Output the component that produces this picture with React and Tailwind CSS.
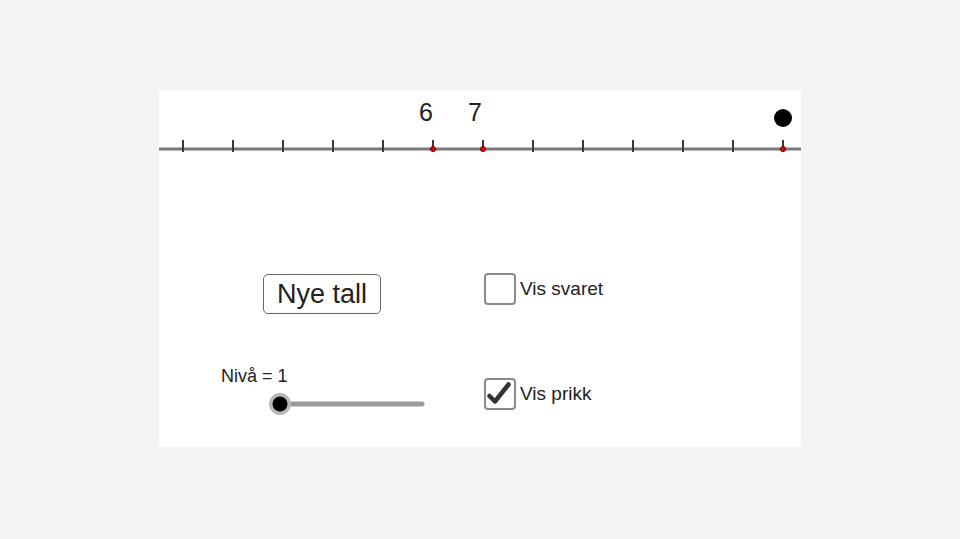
const font = { fontFamily: '"Liberation Sans", Arial, sans-serif' };

function NumberLine() {
  const ticks = Array.from({ length: 13 }, (_, i) => 24 + i * 50);
  const marked = [274, 324, 624];
  return (
    <svg width="642" height="80" className="block">
      <line x1="0" y1="58" x2="642" y2="58" stroke="#7a7a7a" strokeWidth="3" />
      {ticks.map((x) => (
        <line key={x} x1={x} y1="49" x2={x} y2="61" stroke="#3a3a3a" strokeWidth="2" />
      ))}
      {marked.map((x) => (
        <circle key={x} cx={x} cy="58" r="2.6" fill="#e00000" stroke="#600" strokeWidth="0.8" />
      ))}
      <circle cx="624" cy="27" r="9" fill="#000" />
      <text x="267" y="30" textAnchor="middle" fontSize="25" fill="#222" style={font}>6</text>
      <text x="316" y="30" textAnchor="middle" fontSize="25" fill="#222" style={font}>7</text>
    </svg>
  );
}

function CheckBox({ checked, label }) {
  return (
    <label className="flex items-center gap-[4px]">
      <span className="flex h-[32px] w-[32px] items-center justify-center rounded-[4px] border-2 border-[#8a8a8a] bg-white">
        {checked && (
          <svg width="28" height="28" viewBox="0 0 28 28">
            <path d="M3.5 16 L9 21.5 L22.5 4.5" fill="none" stroke="#333" strokeWidth="4.5" strokeLinecap="round" strokeLinejoin="round" />
          </svg>
        )}
      </span>
      <span className="text-[19px] leading-[22px] text-[#222]">{label}</span>
    </label>
  );
}

export default function App() {
  return (
    <div className="flex h-[539px] w-[960px] items-start justify-center bg-[#f3f5f4] pt-[91px]" style={font}>
      <div className="flex h-[356px] w-[642px] flex-col bg-white">
        <NumberLine />
        <div className="mt-[102px] grid grid-cols-[325px_1fr]">
          <div className="pl-[104px] pt-[1px]">
            <button className="flex h-[40px] w-[118px] items-center justify-center rounded-[5px] border border-[#666] bg-white text-[27px] leading-none text-[#222]">
              Nye tall
            </button>
          </div>
          <div>
            <CheckBox checked={false} label="Vis svaret" />
          </div>
        </div>
        <div className="mt-[52px] grid grid-cols-[325px_1fr]">
          <div className="pl-[62px]">
            <div className="text-[18px] leading-[20px] text-[#222]">Nivå = 1</div>
            <svg width="160" height="24" className="mt-[6px] ml-[47px] block">
              <line x1="12" y1="12" x2="154" y2="12" stroke="#9a9a9a" strokeWidth="5" strokeLinecap="round" />
              <circle cx="12" cy="12" r="11" fill="#b8b8b8" />
              <circle cx="12" cy="12" r="7.5" fill="#000" />
            </svg>
          </div>
          <div className="pt-[12px]">
            <CheckBox checked label="Vis prikk" />
          </div>
        </div>
      </div>
    </div>
  );
}
